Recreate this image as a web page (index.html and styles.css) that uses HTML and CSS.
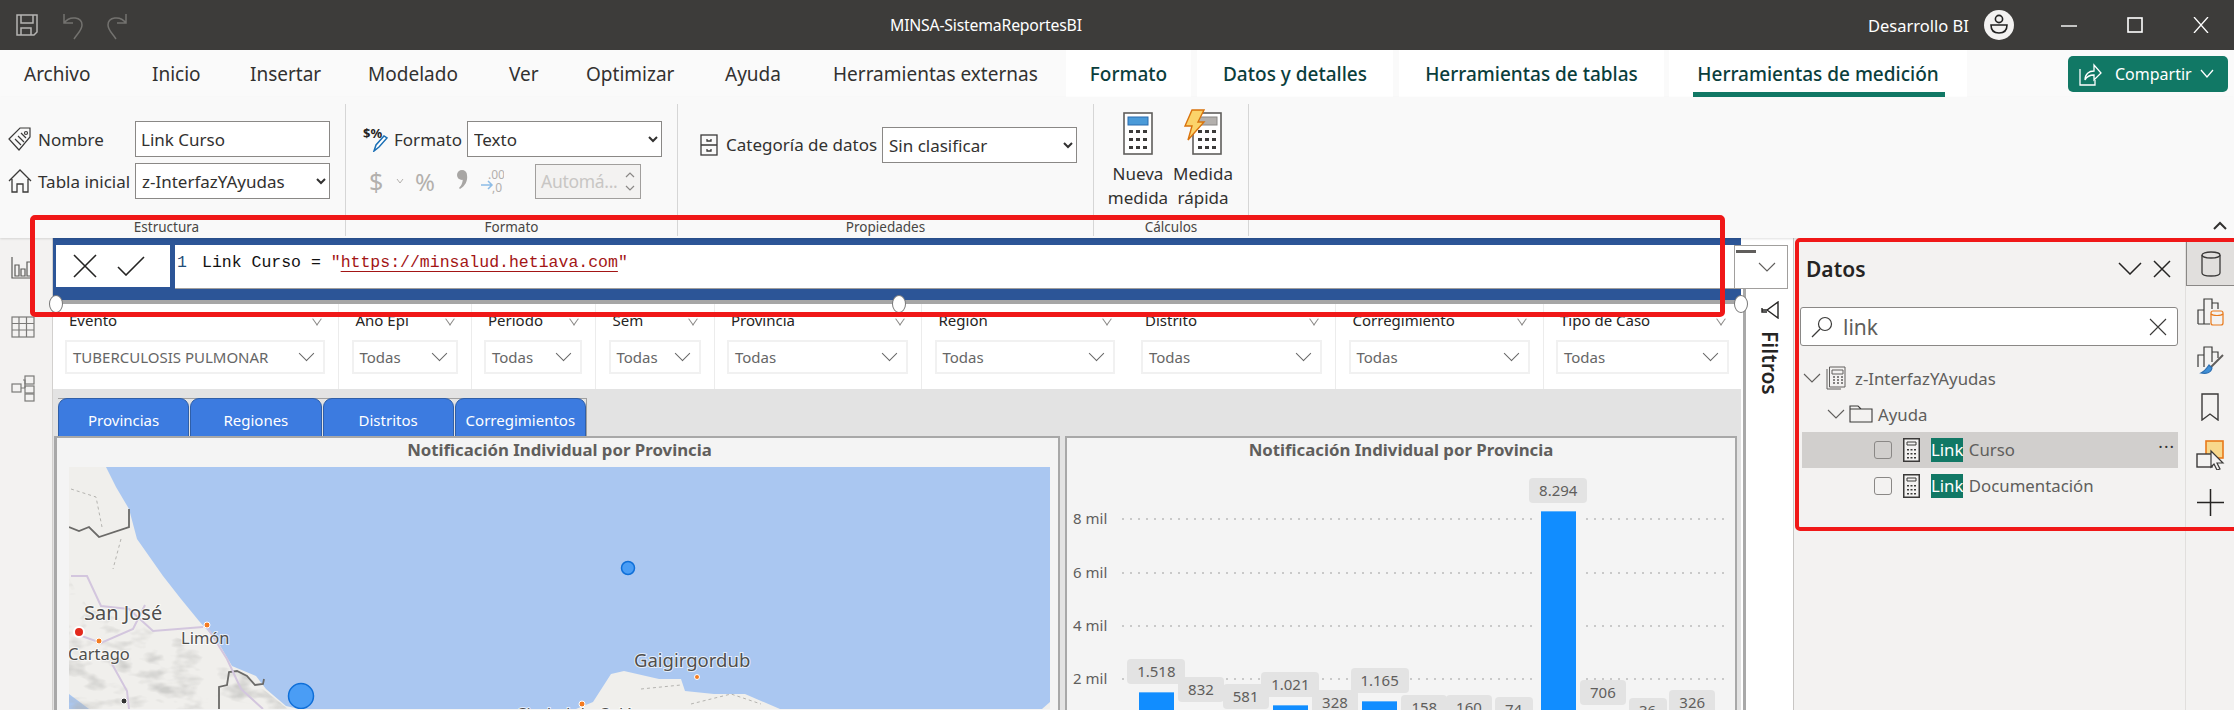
FILE: index.html
```html
<!DOCTYPE html>
<html lang="es">
<head>
<meta charset="utf-8">
<title>MINSA-SistemaReportesBI</title>
<link rel="stylesheet" href="styles.css">
</head>
<body>
<div class="app">

  <!-- title bar -->
  <header class="titlebar">
    <div class="quick">
      <svg width="24" height="24" viewBox="0 0 24 24" fill="none" stroke="#b5b4b2" stroke-width="1.5"><path d="M2 2h20v17l-3 3H2z"/><path d="M6 2v8h12V2M6 22v-7h10v7"/></svg>
      <svg width="22" height="30" viewBox="0 0 22 30" fill="none" stroke="#73726f" stroke-width="1.5"><path d="M2 3v9h9M2 12C8 4 20 6 20 14c0 5-4 8-8 14"/></svg>
      <svg width="22" height="30" viewBox="0 0 22 30" fill="none" stroke="#73726f" stroke-width="1.5"><path d="M20 3v9h-9M20 12C14 4 2 6 2 14c0 5 4 8 8 14"/></svg>
    </div>
    <div class="doc-title">MINSA-SistemaReportesBI</div>
    <div class="user-name">Desarrollo BI</div>
    <svg class="avatar" width="30" height="30" viewBox="0 0 30 30"><circle cx="15" cy="15" r="15" fill="#f3f2f1"/><circle cx="15" cy="9" r="3.6" fill="none" stroke="#222" stroke-width="1.6"/><path d="M7 15h16c0 5-3 8-8 8s-8-3-8-8z" fill="none" stroke="#222" stroke-width="1.6"/></svg>
    <div class="win-btns">
      <svg width="16" height="16" viewBox="0 0 16 16" stroke="#fff" stroke-width="1.4"><path d="M0 9h16"/></svg>
      <svg width="16" height="16" viewBox="0 0 16 16" fill="none" stroke="#fff" stroke-width="1.6"><rect x="1" y="1" width="14" height="14"/></svg>
      <svg width="16" height="16" viewBox="0 0 16 16" stroke="#fff" stroke-width="1.3"><path d="M1 0l14 16M15 0L1 16"/></svg>
    </div>
  </header>

  <!-- ribbon tabs -->
  <nav class="tabs">
    <span class="tab t-archivo">Archivo</span>
    <span class="tab t-inicio">Inicio</span>
    <span class="tab t-insertar">Insertar</span>
    <span class="tab t-modelado">Modelado</span>
    <span class="tab t-ver">Ver</span>
    <span class="tab t-optimizar">Optimizar</span>
    <span class="tab t-ayuda">Ayuda</span>
    <span class="tab t-externas">Herramientas externas</span>
    <span class="ctx-tab ctx-formato">Formato</span>
    <span class="ctx-tab ctx-datos">Datos y detalles</span>
    <span class="ctx-tab ctx-tablas">Herramientas de tablas</span>
    <span class="ctx-tab ctx-medicion active">Herramientas de medición</span>
    <div class="share">
      <svg width="24" height="24" viewBox="0 0 24 24" fill="none" stroke="#fff" stroke-width="1.3"><path d="M2 7v16h15v-5"/><path d="M7 18c0-6 4-9 9-9V3l7 8-7 7v-5c-4 0-7 1-9 5z"/></svg>
      <span>Compartir</span>
      <svg width="14" height="10" viewBox="0 0 14 10" fill="none" stroke="#fff" stroke-width="1.3"><path d="M1 1l6 7 6-7"/></svg>
    </div>
  </nav>

  <!-- ribbon -->
  <section class="ribbon">
    <div class="group g-estructura">
      <div class="group-body field-grid">
        <label class="field">
          <svg width="24" height="24" viewBox="0 0 24 24" fill="none" stroke="#3b3a39" stroke-width="1.2"><path d="M1 12L12 1h10v9L11 23z"/><circle cx="18" cy="6" r="1.5"/><path d="M7 12l6 6M10 9l6 6M13 6l5 5"/></svg>
          Nombre
        </label>
        <input class="text-input" type="text" value="Link Curso">
        <label class="field">
          <svg width="24" height="24" viewBox="0 0 24 24" fill="none" stroke="#3b3a39" stroke-width="1.3"><path d="M1 12L12 1l11 11M4 10v13h5v-8h6v8h5V10"/></svg>
          Tabla inicial
        </label>
        <select class="sel"><option>z-InterfazYAyudas</option></select>
      </div>
      <div class="group-label">Estructura</div>
    </div>

    <div class="group g-formato">
      <div class="group-body">
        <div class="fmt-row">
          <svg width="26" height="26" viewBox="0 0 26 26"><text x="0" y="12" class="fmt-glyph">$%</text><path d="M11 25l2-6 8-9 3 2-8 9z" fill="#fff" stroke="#1a6fb5" stroke-width="1.5"/></svg>
          <span class="fmt-label">Formato</span>
          <select class="sel"><option>Texto</option></select>
        </div>
        <div class="fmt-row off">
          <span class="off-dollar">$</span>
          <svg class="off-chev" width="8" height="6" viewBox="0 0 8 6" fill="none" stroke="#b3b0ad"><path d="M1 1l3 4 3-4"/></svg>
          <span class="off-pct">%</span>
          <svg class="off-comma" width="12" height="20" viewBox="0 0 12 20" fill="#a8a6a4"><circle cx="6" cy="5" r="5"/><path d="M7 5h4c1 6-2 11-7 14l-1-1c3-3 4-6 4-13z"/></svg>
          <svg width="24" height="26" viewBox="0 0 24 26"><text x="8" y="11" class="off-dec">.00</text><text x="12" y="24" class="off-dec">,0</text><path d="M1 17h11M8 13l4 4-4 4" fill="none" stroke="#8cbce6" stroke-width="1.5"/></svg>
          <div class="auto-box">
            <span>Automá...</span>
            <div class="spin">
              <svg width="10" height="8" viewBox="0 0 10 8" fill="none" stroke="#8a8886" stroke-width="1.2"><path d="M1 6l4-4 4 4"/></svg>
              <svg width="10" height="8" viewBox="0 0 10 8" fill="none" stroke="#8a8886" stroke-width="1.2"><path d="M1 2l4 4 4-4"/></svg>
            </div>
          </div>
        </div>
      </div>
      <div class="group-label">Formato</div>
    </div>

    <div class="group g-props">
      <div class="group-body cat-row">
        <svg width="18" height="22" viewBox="0 0 18 22" fill="none" stroke="#3b3a39" stroke-width="1.3"><rect x="1" y="1" width="16" height="20"/><path d="M1 11h16M7 5v2h4V5M7 15v2h4v-2"/></svg>
        <span class="cat-label">Categoría de datos</span>
        <select class="sel"><option>Sin clasificar</option></select>
      </div>
      <div class="group-label">Propiedades</div>
    </div>

    <div class="group g-calc">
      <div class="group-body calc-row">
        <div class="big-btn">
          <div class="big-icon">
            <svg width="30" height="43" viewBox="0 0 30 43"><rect x="1" y="1" width="28" height="41" fill="#fff" stroke="#605e5c" stroke-width="1.6"/><rect x="5" y="5" width="20" height="8" fill="#4a9ad8" stroke="#2a6db0"/><path d="M6 18h4v3H6zM13 18h4v3h-4zM20 18h4v3h-4zM6 26h4v3H6zM13 26h4v3h-4zM20 26h4v3h-4zM6 34h4v3H6zM13 34h4v3h-4zM20 34h4v3h-4z" fill="#3b3a39"/></svg>
          </div>
          <span>Nueva<br>medida</span>
        </div>
        <div class="big-btn">
          <div class="big-icon">
            <svg width="40" height="46" viewBox="0 0 40 46"><rect x="10" y="4" width="28" height="41" fill="#fff" stroke="#605e5c" stroke-width="1.6"/><rect x="14" y="8" width="20" height="8" fill="#b3b0ad" stroke="#8a8886"/><path d="M15 21h4v3h-4zM22 21h4v3h-4zM29 21h4v3h-4zM15 29h4v3h-4zM22 29h4v3h-4zM29 29h4v3h-4zM15 37h4v3h-4zM22 37h4v3h-4zM29 37h4v3h-4z" fill="#3b3a39"/><path d="M9 1h12l-6 12h6L5 31l4-14H2z" fill="#fbd36a" stroke="#d9730d" stroke-width="1.4"/></svg>
          </div>
          <span>Medida<br>rápida</span>
        </div>
      </div>
      <div class="group-label">Cálculos</div>
    </div>

    <svg class="collapse" width="14" height="10" viewBox="0 0 14 10" fill="none" stroke="#323130" stroke-width="2"><path d="M1 8l6-6 6 6"/></svg>
  </section>

  <!-- work area -->
  <main class="work">
    <aside class="views">
      <svg width="24" height="22" viewBox="0 0 24 22" fill="none" stroke="#5c5b59" stroke-width="1.2"><path d="M1 0v21h23M4 8h4v11H4zM10 12h4v7h-4zM16 5h4v14h-4z"/></svg>
      <svg width="24" height="22" viewBox="0 0 24 22" fill="none" stroke="#7b7a78" stroke-width="1.2"><rect x="1" y="1" width="22" height="20"/><path d="M1 7.500h22M1 14h22M8 1v20M15.500 1v20"/></svg>
      <svg width="24" height="27" viewBox="0 0 24 27" fill="none" stroke="#7b7a78" stroke-width="1.2"><rect x="14" y="1" width="9" height="8"/><rect x="1" y="9" width="9" height="8"/><rect x="14" y="11" width="9" height="7"/><rect x="14" y="19" width="9" height="7"/><path d="M10 13h4M12 5h2v8"/></svg>
    </aside>

    <div class="center">
      <div class="left-col">
        <!-- formula bar -->
        <div class="formula">
          <div class="formula-btns">
            <svg width="24" height="24" viewBox="0 0 24 24" stroke="#252423" stroke-width="1.6"><path d="M1 1l22 22M23 1L1 23"/></svg>
            <svg width="28" height="20" viewBox="0 0 28 20" fill="none" stroke="#252423" stroke-width="1.6"><path d="M1 11l8 8L27 1"/></svg>
          </div>
          <div class="formula-edit"><span class="line-no">1</span><span>Link Curso = </span><span class="str">"<span class="url">https://minsalud.hetiava.com</span>"</span></div>
        </div>
        <div class="formula-edge"></div>

        <!-- report canvas -->
        <div class="canvas">
          <div class="slicers">
            <div class="slicer sl-evento sep"><div class="sl-title">Evento<i class="mini"></i></div><div class="sl-box">TUBERCULOSIS PULMONAR<i class="chev"></i></div></div>
            <div class="slicer sl-anio sep"><div class="sl-title">Año Epi<i class="mini"></i></div><div class="sl-box">Todas<i class="chev"></i></div></div>
            <div class="slicer sl-periodo sep"><div class="sl-title">Periodo<i class="mini"></i></div><div class="sl-box">Todas<i class="chev"></i></div></div>
            <div class="slicer sl-sem sep"><div class="sl-title">Sem<i class="mini"></i></div><div class="sl-box">Todas<i class="chev"></i></div></div>
            <div class="slicer sl-prov sep"><div class="sl-title">Provincia<i class="mini"></i></div><div class="sl-box">Todas<i class="chev"></i></div></div>
            <div class="slicer sl-region"><div class="sl-title">Región<i class="mini"></i></div><div class="sl-box">Todas<i class="chev"></i></div></div>
            <div class="slicer sl-distrito sep"><div class="sl-title">Distrito<i class="mini"></i></div><div class="sl-box">Todas<i class="chev"></i></div></div>
            <div class="slicer sl-corr sep"><div class="sl-title">Corregimiento<i class="mini"></i></div><div class="sl-box">Todas<i class="chev"></i></div></div>
            <div class="slicer sl-tipo"><div class="sl-title">Tipo de Caso<i class="mini"></i></div><div class="sl-box">Todas<i class="chev"></i></div></div>
          </div>

          <div class="page-tabs">
            <span class="page-tab">Provincias</span>
            <span class="page-tab">Regiones</span>
            <span class="page-tab">Distritos</span>
            <span class="page-tab">Corregimientos</span>
          </div>

          <div class="visuals">
            <div class="visual v-map">
              <div class="v-title">Notificación Individual por Provincia</div>
              <svg class="map" width="981" height="242" viewBox="68 468 981 242">
                <defs>
                  <filter id="terrain" x="0" y="0" width="100%" height="100%">
                    <feTurbulence type="fractalNoise" baseFrequency=".035 .07" numOctaves="3" seed="4"/>
                    <feColorMatrix values="0 0 0 0 .45  0 0 0 0 .45  0 0 0 0 .44  0 0 0 3.2 -1.55"/>
                  </filter>
                  <clipPath id="coast"><path d="M68 580L88 610 120 620 180 640 233 667 287 710H68z"/></clipPath>
                </defs>
                <rect x="68" y="468" width="981" height="242" fill="#aac7f1"/>
                <path d="M68 468h37l10 20 13 22 8 30 26 37 18 23 18 22 19 21 14 24 24 10 10 13 20 17 13 3H88l-20-15z" fill="#f0efec"/>
                <path d="M575 710l17-7 18-28 13-3 35 8 22 0 4 12 29 3 31 0 35 15z" fill="#f0efec"/>
                <path d="M1041 710l8-7v7z" fill="#f0efec"/>
                <rect x="68" y="560" width="240" height="150" filter="url(#terrain)" clip-path="url(#coast)" opacity=".55"/>
                <path d="M128 510v18l-30 10-10-10-10 4-10-4" fill="none" stroke="#6b6a68" stroke-width="1.8"/>
                <path d="M218 710v-22l8-2 2-13 8-1 10 5 8 9 8-1 1-5" fill="none" stroke="#6b6a68" stroke-width="1.8"/>
                <path d="M70 577h16l14 30 28 3 24 22 50-4M78 636l22 8 32-14 12-24M111 665l15 27 2 18M206 628l20 32 14 30 22 20" fill="none" stroke="#d3c6de" stroke-width="2"/>
                <path d="M70 490l25 8 6 30M120 540l-8 30M640 690l40-4M690 705l40-10 30 10" fill="none" stroke="#b5b4b0" stroke-dasharray="3 3"/>
                <circle cx="78" cy="633" r="5" fill="#e3291c" stroke="#fff" stroke-width="2"/>
                <circle cx="98" cy="642" r="3" fill="#f47b20" stroke="#fff"/>
                <circle cx="206" cy="626" r="3" fill="#f47b20" stroke="#fff"/>
                <circle cx="696" cy="678" r="2.500" fill="#f47b20" stroke="#fff"/>
                <circle cx="581" cy="705" r="3" fill="#f47b20" stroke="#fff"/>
                <circle cx="123" cy="702" r="3" fill="#333" stroke="#fff"/>
                <text x="83" y="621" class="city big">San José</text>
                <text x="180" y="645" class="city sm">Limón</text>
                <text x="67" y="661" class="city sm">Cartago</text>
                <text x="633" y="668" class="city">Gaigirgordub</text>
                <text x="515" y="721" class="city sm">Ciudad de Colón</text>
                <circle cx="627" cy="569" r="6.500" fill="#4a9df5" stroke="#0f6fd8" stroke-width="1.5"/>
                <circle cx="300" cy="697" r="12.500" fill="#4a9df5" stroke="#0f6fd8" stroke-width="1.5"/>
              </svg>
            </div>

            <div class="visual v-chart">
              <div class="v-title">Notificación Individual por Provincia</div>
              <div class="plot">
                <div class="grid-line g8"><span>8 mil</span></div>
                <div class="grid-line g6"><span>6 mil</span></div>
                <div class="grid-line g4"><span>4 mil</span></div>
                <div class="grid-line g2"><span>2 mil</span></div>
                <div class="bars">
                  <div class="col"><span class="pill wide">1.518</span><div class="bar" style="height:40.5px"></div></div>
                  <div class="col"><span class="pill">832</span><div class="bar" style="height:22.2px"></div></div>
                  <div class="col"><span class="pill">581</span><div class="bar" style="height:15.5px"></div></div>
                  <div class="col"><span class="pill wide">1.021</span><div class="bar" style="height:27.2px"></div></div>
                  <div class="col"><span class="pill">328</span><div class="bar" style="height:8.7px"></div></div>
                  <div class="col"><span class="pill wide">1.165</span><div class="bar" style="height:31.1px"></div></div>
                  <div class="col"><span class="pill">158</span><div class="bar" style="height:4.2px"></div></div>
                  <div class="col"><span class="pill">160</span><div class="bar" style="height:4.3px"></div></div>
                  <div class="col"><span class="pill narrow">74</span><div class="bar" style="height:2px"></div></div>
                  <div class="col"><span class="pill wide">8.294</span><div class="bar" style="height:221.2px"></div></div>
                  <div class="col"><span class="pill">706</span><div class="bar" style="height:18.8px"></div></div>
                  <div class="col"><span class="pill narrow">36</span><div class="bar" style="height:1px"></div></div>
                  <div class="col"><span class="pill">326</span><div class="bar" style="height:8.7px"></div></div>
                </div>
              </div>
            </div>
          </div>
        </div>
      </div>

      <div class="right-col">
        <div class="formula-toggle">
          <i class="dash"></i>
          <svg width="18" height="10" viewBox="0 0 18 10" fill="none" stroke="#605e5c" stroke-width="1.1"><path d="M1 1l8 8 8-8"/></svg>
        </div>
        <div class="filters">
          <svg width="18" height="18" viewBox="0 0 18 18" fill="none" stroke="#252423" stroke-width="1.4"><path d="M1 9h5L17 1v16L6 9"/><path d="M1 7v4h5" /></svg>
          <span class="filters-text">Filtros</span>
        </div>
      </div>
    </div>

    <!-- data pane -->
    <aside class="data-pane">
      <div class="pane-head">
        <span class="pane-title">Datos</span>
        <svg width="24" height="13" viewBox="0 0 24 13" fill="none" stroke="#252423" stroke-width="1.5"><path d="M1 1l11 11L23 1"/></svg>
        <svg width="18" height="18" viewBox="0 0 18 18" stroke="#252423" stroke-width="1.5"><path d="M1 1l16 16M17 1L1 17"/></svg>
      </div>
      <div class="search">
        <svg width="22" height="22" viewBox="0 0 22 22" fill="none" stroke="#3b3a39" stroke-width="1.2"><circle cx="14" cy="8" r="6.500"/><path d="M9 13l-8 8"/></svg>
        <span class="search-text">link</span>
        <svg width="18" height="18" viewBox="0 0 18 18" stroke="#3b3a39" stroke-width="1.1"><path d="M1 1l16 16M17 1L1 17"/></svg>
      </div>
      <div class="tree">
        <div class="row r-table">
          <svg class="tw" width="18" height="10" viewBox="0 0 18 10" fill="none" stroke="#605e5c" stroke-width="1.1"><path d="M1 1l8 8 8-8"/></svg>
          <svg width="20" height="24" viewBox="0 0 20 24" fill="none" stroke="#605e5c"><path d="M1 3v20h14M3.500 1v20H19V1zM6 4h11v4H6z"/><path d="M7 11h2M11 11h2M15 11h2M7 14h2M11 14h2M15 14h2M7 17h2M11 17h2M15 17h2" stroke-width="1.5"/></svg>
          <span>z-InterfazYAyudas</span>
        </div>
        <div class="row r-folder">
          <svg class="tw" width="18" height="10" viewBox="0 0 18 10" fill="none" stroke="#605e5c" stroke-width="1.1"><path d="M1 1l8 8 8-8"/></svg>
          <svg width="24" height="18" viewBox="0 0 24 18" fill="none" stroke="#3b3a39" stroke-width="1.1"><path d="M1 17V1h8l3 3h11v13zM1 4h11"/></svg>
          <span>Ayuda</span>
        </div>
        <div class="row r-measure hover">
          <i class="check"></i>
          <svg width="17" height="24" viewBox="0 0 17 24"><rect x=".75" y=".75" width="15.500" height="22.500" fill="#f3f2f1" stroke="#3b3a39" stroke-width="1.5"/><path d="M4 4h9v3H4z" fill="none" stroke="#3b3a39"/><path d="M4 11h2v1.500H4zM7.500 11h2v1.500h-2zM11 11h2v1.500h-2zM4 15h2v1.500H4zM7.500 15h2v1.500h-2zM11 15h2v1.500h-2zM4 19h2v1.500H4zM7.500 19h2v1.500h-2zM11 19h2v1.500h-2z" fill="#3b3a39"/></svg>
          <span><mark class="hit">Link</mark> Curso</span>
          <span class="dots">···</span>
        </div>
        <div class="row r-measure">
          <i class="check"></i>
          <svg width="17" height="24" viewBox="0 0 17 24"><rect x=".75" y=".75" width="15.500" height="22.500" fill="#f3f2f1" stroke="#3b3a39" stroke-width="1.5"/><path d="M4 4h9v3H4z" fill="none" stroke="#3b3a39"/><path d="M4 11h2v1.500H4zM7.500 11h2v1.500h-2zM11 11h2v1.500h-2zM4 15h2v1.500H4zM7.500 15h2v1.500h-2zM11 15h2v1.500h-2zM4 19h2v1.500H4zM7.500 19h2v1.500h-2zM11 19h2v1.500h-2z" fill="#3b3a39"/></svg>
          <span><mark class="hit">Link</mark> Documentación</span>
        </div>
      </div>
    </aside>

    <aside class="rail">
      <div class="rail-btn selected">
        <svg width="20" height="26" viewBox="0 0 20 26" fill="none" stroke="#3b3a39" stroke-width="1.3"><ellipse cx="10" cy="4" rx="9" ry="3"/><path d="M1 4v18c0 2 4 3 9 3s9-1 9-3V4"/></svg>
      </div>
      <div class="rail-btn">
        <svg width="27" height="28" viewBox="0 0 27 28" fill="none" stroke="#3b3a39" stroke-width="1.2"><path d="M1 26V12h6M7 26V1h8v10M1 26h12M15 5h6v6"/><rect x="14" y="13" width="12" height="14" rx="2" stroke="#e8791a" fill="#f3f2f1"/><path d="M14 16c2 2 10 2 12 0" stroke="#e8791a"/></svg>
      </div>
      <div class="rail-btn">
        <svg width="27" height="28" viewBox="0 0 27 28" fill="none" stroke="#3b3a39" stroke-width="1.2"><path d="M1 21V9h6M7 21V1h8v15M15 6h6v6"/><path d="M26 9L14 21" stroke="#605e5c" stroke-width="2"/><path d="M4 27c5 1 10 0 11-5l-3-3c-2 3-4 6-8 8z" fill="#3f8fd6" stroke="#2a6db0"/></svg>
      </div>
      <div class="rail-btn">
        <svg width="18" height="28" viewBox="0 0 18 28" fill="none" stroke="#3b3a39" stroke-width="1.4"><path d="M1 1h16v26l-8-6-8 6z"/></svg>
      </div>
      <div class="rail-btn">
        <svg width="29" height="30" viewBox="0 0 29 30"><rect x="10" y="1" width="17" height="17" fill="#f8d88c" stroke="#e8791a" stroke-width="1.6"/><rect x="1" y="14" width="15" height="13" fill="#f3f2f1" stroke="#3b3a39" stroke-width="1.4"/><path d="M15 11l12 12-6 0 3 6-3 1-3-6-3 3z" fill="#f3f2f1" stroke="#3b3a39" stroke-width="1.2"/></svg>
      </div>
      <div class="rail-btn">
        <svg width="27" height="27" viewBox="0 0 27 27" stroke="#252423" stroke-width="1.5"><path d="M13.500 0v27M0 13.500h27"/></svg>
      </div>
    </aside>
  </main>

  <!-- red highlight boxes added on the screenshot -->
  <div class="mark mark-formula"></div>
  <div class="mark mark-data"></div>
  <i class="handle h1"></i>
  <i class="handle h2"></i>
  <i class="handle h3"></i>
</div>
</body>
</html>
```

FILE: styles.css
```css
* {
  box-sizing: border-box;
}

html, body {
  margin: 0;
  padding: 0;
  background: #fff;
}

body {
  font-family: "Noto Sans", "Open Sans", sans-serif;
  color: #323130;
}

.app {
  position: relative;
  width: 2234px;
  height: 710px;
  overflow: hidden;
  display: flex;
  flex-direction: column;
}

/* title bar */
.titlebar {
  height: 50px;
  flex: none;
  background: #3d3c3a;
  color: #fff;
  display: flex;
  align-items: center;
  position: relative;
  padding-left: 15px;
  font-size: 15.8px;
}

.quick {
  display: flex;
  align-items: center;
  gap: 22px;
  width: 857px;
}

.quick svg:nth-child(n+2) {
  margin-top: 2px;
}

.quick svg:nth-child(2) {
  margin-left: 1px;
}

.doc-title {
  width: 996px;
  padding-left: 18px;
  letter-spacing: -.2px;
}

.user-name {
  width: 116px;
  font-size: 16.5px;
}

.avatar {
  flex: none;
}

.win-btns {
  display: flex;
  gap: 50px;
  margin-left: 47px;
}

/* tabs */
.tabs {
  height: 47px;
  flex: none;
  background: #fafafa;
  display: flex;
  align-items: center;
  font-size: 19px;
  padding-left: 24px;
  padding-top: 1px;
  position: relative;
}

.tab {
  flex: none;
}

.t-archivo { width: 128px; }
.t-inicio { width: 98px; }
.t-insertar { width: 118px; }
.t-modelado { width: 141px; }
.t-ver { width: 77px; }
.t-optimizar { width: 139px; }
.t-ayuda { width: 108px; }
.t-externas { width: 233px; }

.ctx-tab {
  flex: none;
  align-self: flex-start;
  margin-top: -1px;
  height: 47px;
  line-height: 49px;
  background: #fff;
  color: #0a3e3c;
  font-weight: 500;
  text-align: center;
  margin-right: 6px;
  position: relative;
}

.ctx-formato { width: 125px; }
.ctx-datos { width: 196px; }
.ctx-tablas { width: 265px; margin-right: 5px; }
.ctx-medicion { width: 298px; }

.ctx-tab.active::after {
  content: "";
  position: absolute;
  left: 24px;
  right: 22px;
  bottom: 0;
  height: 5px;
  background: #117865;
}

.share {
  margin-left: 95px;
  width: 160px;
  height: 36px;
  align-self: flex-start;
  margin-top: 5px;
  background: #117865;
  color: #fff;
  border-radius: 5px;
  display: flex;
  align-items: center;
  padding-left: 10px;
  font-size: 16px;
  gap: 13px;
}

.share svg:last-child {
  margin-left: -5px;
}

/* ribbon */
.ribbon {
  height: 141px;
  flex: none;
  background: #f9f9f9;
  display: flex;
  padding-top: 7px;
  position: relative;
  box-shadow: 0 1px 2px rgba(0, 0, 0, .12);
  z-index: 1;
}

.group {
  height: 132px;
  border-right: 1px solid #d6d6d6;
  display: flex;
  flex-direction: column;
  flex: none;
}

.group-body {
  flex: 1;
}

.group-label {
  height: 17px;
  text-align: center;
  font-size: 13.5px;
  line-height: 17px;
  color: #484644;
}

.g-estructura { width: 346px; }
.g-estructura .group-label { padding-right: 12px; }
.g-formato { width: 332px; }
.g-props { width: 416px; }
.g-calc { width: 155px; }

.field-grid {
  padding: 17px 0 0 8px;
  display: grid;
  grid-template-columns: 127px 195px;
  grid-auto-rows: 36px;
  row-gap: 6px;
}

.field {
  display: flex;
  align-items: center;
  gap: 6px;
  font-size: 17px;
  white-space: nowrap;
}

.text-input,
.sel {
  font-family: inherit;
  font-size: 17px;
  height: 36px;
  width: 195px;
  border: 1px solid #8a8886;
  background-color: #fff;
  color: #323130;
  padding: 0 2px;
  border-radius: 0;
}

.text-input {
  padding: 0 5px;
}

.fmt-row {
  display: flex;
  align-items: center;
  height: 36px;
  margin-bottom: 6px;
}

.g-formato .group-body {
  padding: 17px 0 0 17px;
}

.fmt-glyph {
  font-size: 13px;
  font-weight: 700;
  fill: #252423;
}

.fmt-label {
  font-size: 17px;
  margin: 0 7px 0 5px;
  width: 66px;
}

.off {
  color: #b3b0ad;
  padding-left: 6px;
}

.off-dollar { font-size: 25px; width: 25px; }
.off-chev { margin: 0 11px 0 2px; }
.off-pct { font-size: 24px; width: 41px; }
.off-comma { margin: 0 12px 2px 0; }

.off-dec {
  font-size: 12px;
  fill: #b3b0ad;
}

.auto-box {
  width: 106px;
  height: 35px;
  margin-left: 31px;
  border: 1px solid #a19f9d;
  background: #f3f2f1;
  display: flex;
  align-items: center;
  justify-content: space-between;
  padding: 0 5px;
  font-size: 17.5px;
  letter-spacing: -.3px;
  color: #c8c6c4;
  white-space: nowrap;
  overflow: hidden;
}

.spin {
  display: flex;
  flex-direction: column;
  gap: 5px;
}

.cat-row {
  display: flex;
  align-items: flex-start;
  padding: 23px 0 0 22px;
}

.cat-row svg {
  margin-top: 7px;
}

.cat-label {
  font-size: 17px;
  margin: 6px 6px 0 8px;
  width: 150px;
  white-space: nowrap;
}

.calc-row {
  display: flex;
  padding: 1px 0 0 13px;
  font-size: 17px;
  text-align: center;
  line-height: 24px;
}

.big-btn {
  width: 62px;
  display: flex;
  flex-direction: column;
  align-items: center;
  margin-right: 3px;
}

.big-icon {
  height: 50px;
  display: flex;
  align-items: flex-end;
  margin-bottom: 7px;
}

.collapse {
  position: absolute;
  right: 7px;
  top: 124px;
}

/* work area */
.work {
  flex: 1;
  display: flex;
  min-height: 0;
  background: #fff;
}

.views {
  width: 53px;
  flex: none;
  background: #f3f2f1;
  border-right: 1px solid #d2d0ce;
  display: flex;
  flex-direction: column;
  align-items: center;
  padding-top: 19px;
  gap: 37px;
}

.views svg {
  margin-left: -6px;
}

.center {
  width: 1740px;
  flex: none;
  display: flex;
}

.left-col {
  width: 1688px;
  flex: none;
  display: flex;
  flex-direction: column;
}

.right-col {
  width: 52px;
  flex: none;
  padding-top: 7px;
  display: flex;
  flex-direction: column;
  position: relative;
  z-index: 1;
}

/* formula bar */
.formula {
  height: 62px;
  flex: none;
  background: #2c5597;
  display: flex;
  padding: 7px 0 0 3px;
  gap: 5px;
}

.formula-btns {
  width: 114px;
  height: 42px;
  background: #fff;
  display: flex;
  align-items: center;
  gap: 20px;
  padding-left: 17px;
}

.formula-edit {
  flex: 1;
  height: 44px;
  background: #fff;
  border-bottom: 1px solid #a19f9d;
  font-family: "Liberation Mono", monospace;
  font-size: 16.5px;
  line-height: 36px;
  color: #111;
  padding-left: 2px;
  white-space: pre;
}

.line-no {
  color: #1f4e79;
  display: inline-block;
  width: 25px;
}

.str {
  color: #a31515;
}

.url {
  text-decoration: underline;
  text-underline-offset: 4px;
}

.formula-edge {
  height: 4px;
  flex: none;
  background: #a6a6a6;
}

.formula-toggle {
  height: 44px;
  flex: none;
  width: 54px;
  margin-left: -7px;
  border: 1px solid #a19f9d;
  background: #fff;
  position: relative;
  display: flex;
  align-items: center;
  justify-content: flex-end;
  padding: 0 11px 0 0;
}

.dash {
  position: absolute;
  left: 1px;
  top: 4px;
  width: 20px;
  height: 3px;
  background: #605e5c;
}

.filters {
  flex: 1;
  background: #fff;
  border-left: 3px solid #a9a9a9;
  margin-left: 2px;
  display: flex;
  flex-direction: column;
  align-items: center;
  padding-top: 12px;
  gap: 12px;
}

.filters-text {
  writing-mode: vertical-rl;
  font-weight: 600;
  font-size: 21px;
  line-height: 24px;
  color: #252423;
}

/* report canvas */
.canvas {
  flex: 1;
  min-height: 0;
  background: #e3e3e3;
  overflow: hidden;
}

.slicers {
  height: 85px;
  background: #fff;
  display: flex;
  gap: 26.5px;
  padding-left: 12px;
}

.slicer {
  flex: none;
  position: relative;
}

.slicer.sep::after {
  content: "";
  position: absolute;
  top: 0;
  bottom: 0;
  right: -14px;
  width: 1px;
  background: #ececec;
}

.sl-evento { width: 260px; }
.sl-anio { width: 106px; }
.sl-periodo { width: 98px; }
.sl-sem { width: 92px; }
.sl-prov { width: 181px; }
.sl-region { width: 180px; }
.sl-distrito { width: 181px; }
.sl-corr { width: 181px; }
.sl-tipo { width: 173px; }

.sl-title {
  height: 36px;
  padding: 6px 0 0 4px;
  font-size: 15px;
  color: #252423;
  position: relative;
}

.mini {
  position: absolute;
  right: 4px;
  top: 11px;
  width: 8px;
  height: 8px;
  border-right: 1px solid #8a8886;
  border-bottom: 1px solid #8a8886;
  transform: rotate(45deg) skew(10deg, 10deg);
}

.sl-box {
  height: 34px;
  border: 2px solid #f1f1f1;
  font-size: 15px;
  line-height: 30px;
  padding-left: 6px;
  color: #666;
  position: relative;
  white-space: nowrap;
}

.chev {
  position: absolute;
  right: 11px;
  top: 6px;
  width: 11px;
  height: 11px;
  border-right: 1px solid #666;
  border-bottom: 1px solid #666;
  transform: rotate(45deg);
}

.page-tabs {
  margin: 9px 0 0 5px;
  width: 529px;
  height: 39px;
  border-top: 1px solid #a0a0a0;
  border-right: 1px solid #a0a0a0;
  display: flex;
  gap: 1px;
}

.page-tab {
  width: 131.250px;
  height: 39px;
  margin-top: -1px;
  background: #3c7be0;
  border: 1px solid #2f5fa8;
  border-radius: 9px 9px 0 0;
  color: #fff;
  font-size: 15px;
  display: flex;
  align-items: center;
  justify-content: center;
  padding-top: 4px;
}

.visuals {
  display: flex;
  align-items: flex-start;
  padding-left: 1px;
  margin-top: -1px;
}

.visual {
  background: #f4f4f4;
  height: 320px;
  flex: none;
  border: 2px solid #a8a8a8;
  border-bottom: 0;
}

.v-map {
  width: 1006px;
  padding-left: 12px;
  border-left-width: 3px;
}

.v-map .v-title {
  padding-right: 8px;
}

.v-chart {
  width: 672px;
  margin-left: 5px;
  position: relative;
}

.v-title {
  height: 29px;
  text-align: center;
  font-weight: 700;
  font-size: 16.8px;
  line-height: 23px;
  color: #605e5c;
}

.map {
  display: block;
}

.city {
  font-size: 18.5px;
  fill: #4f4e4c;
  stroke: #fff;
  stroke-opacity: .7;
  stroke-width: 2px;
  paint-order: stroke;
}

.city.sm {
  font-size: 16.5px;
}

.city.big {
  font-size: 20px;
}

/* chart */
.plot {
  position: relative;
  height: 265px;
}

.grid-line {
  position: absolute;
  left: 0;
  right: 9px;
  height: 2px;
  background: radial-gradient(circle, #c9c9c9 1px, transparent 1.3px) 52px 0 / 8px 2px repeat-x;
  background-clip: content-box;
  padding-left: 52px;
}

.grid-line span {
  position: absolute;
  left: 6px;
  top: -12px;
  font-size: 15px;
  color: #605e5c;
  background: #f4f4f4;
  line-height: 24px;
}

.g8 { top: 51px; }
.g6 { top: 105px; }
.g4 { top: 158px; }
.g2 { top: 211px; }

.bars {
  position: absolute;
  left: 67px;
  bottom: 0;
  display: flex;
  align-items: flex-end;
}

.col {
  width: 44.670px;
  display: flex;
  flex-direction: column;
  align-items: center;
}

.pill {
  flex: none;
  width: 46px;
  height: 25px;
  margin-bottom: 8px;
  border-radius: 4px;
  background: #e3e3e3;
  color: #605e5c;
  font-size: 15px;
  line-height: 25px;
  text-align: center;
  position: relative;
}

.pill.wide { width: 58px; }
.pill.narrow { width: 38px; }

.bar {
  width: 35px;
  flex: none;
  background: #118dff;
  border-top: 1px solid #5eb1fb;
  box-shadow: 0 0 0 5px #f4f4f4;
}

/* data pane */
.data-pane {
  width: 393px;
  flex: none;
  background: #f3f2f1;
  border-left: 1px solid #c8c6c4;
  padding: 0 7px 0 6px;
  border-right: 1px solid #e1dfdd;
}

.pane-head {
  height: 69px;
  display: flex;
  align-items: center;
  padding: 0 5px 8px 6px;
}

.pane-title {
  font-size: 21px;
  font-weight: 600;
  color: #252423;
  width: 312px;
}

.pane-head svg:last-child {
  margin-left: 11px;
}

.search {
  height: 39px;
  width: 378px;
  background: #fff;
  border: 1px solid #8a8886;
  border-radius: 3px;
  display: flex;
  align-items: center;
  padding-left: 10px;
}

.search-text {
  font-size: 21px;
  color: #605e5c;
  margin-left: 10px;
  width: 306px;
}

.tree {
  margin-top: 14px;
  padding-left: 2px;
  font-size: 16.8px;
  color: #605e5c;
}

.row {
  display: flex;
  align-items: center;
  height: 36px;
  width: 376px;
}

.r-table { padding-left: 1px; gap: 5px; }
.r-table span { margin-left: 4px; }
.r-folder { padding-left: 25px; gap: 4px; }
.r-folder span { margin-left: 1px; }
.r-measure { padding-left: 72px; position: relative; }

.hover {
  background: #d1cfcd;
}

.check {
  width: 18px;
  height: 18px;
  border: 1px solid #8a8886;
  border-radius: 3px;
  margin-right: 11px;
}

.hit {
  background: #117865;
  color: #fff;
  display: inline-block;
  height: 24px;
  line-height: 24px;
  padding: 0;
  margin: 0 1px 0 11px;
}

.dots {
  position: absolute;
  right: 3px;
  top: 3px;
  letter-spacing: 1px;
  font-size: 17px;
  color: #323130;
}

/* icon rail */
.rail {
  width: 48px;
  flex: none;
  background: #f3f2f1;
  padding-top: 4px;
}

.rail-btn {
  height: 47.700px;
  display: flex;
  align-items: center;
  justify-content: center;
}

.rail-btn.selected {
  height: 44px;
  background: #e1dfdd;
  border-left: 1px solid #8a8886;
  border-bottom: 1px solid #8a8886;
  margin-bottom: 2px;
}

/* resize handles of the selected visual */
.handle {
  position: absolute;
  width: 14px;
  height: 18px;
  top: 295px;
  background: #fff;
  border: 1.5px solid #777;
  border-radius: 50%;
  z-index: 2;
}

.h1 { left: 49px; }
.h2 { left: 892px; }
.h3 { left: 1734px; }

/* red annotation boxes */
.mark {
  position: absolute;
  border-style: solid;
  border-color: #f01818;
  border-radius: 5px;
  z-index: 3;
}

.mark-formula {
  left: 30px;
  top: 215px;
  width: 1695px;
  height: 102px;
  border-width: 5px;
}

.mark-data {
  left: 1795px;
  top: 238px;
  width: 460px;
  height: 293px;
  border-width: 4px;
}
```
